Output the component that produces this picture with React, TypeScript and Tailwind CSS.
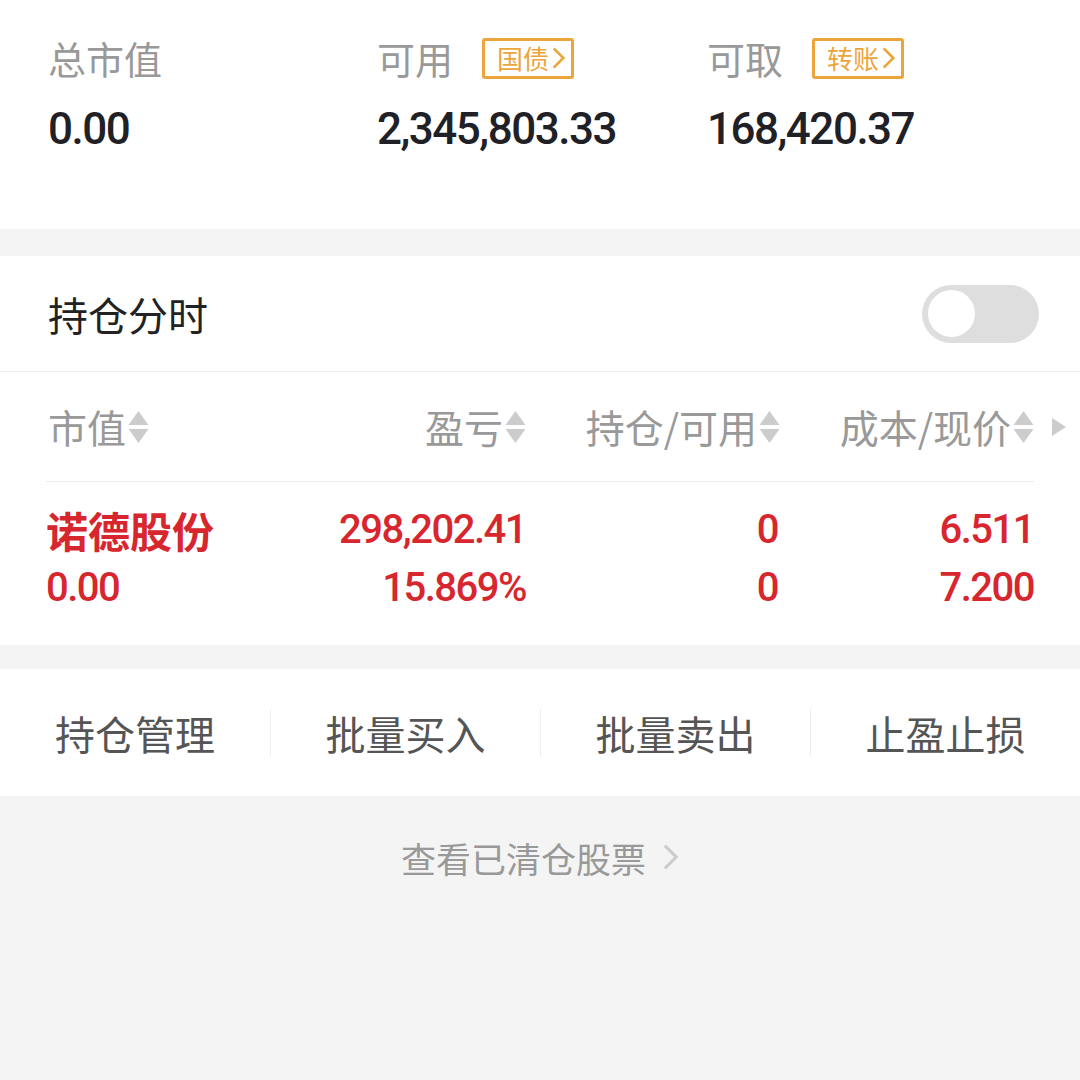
import React from "react";

const CJK = "font-['Noto_Sans_CJK_SC',sans-serif]";
const NUM = "font-['Roboto','Noto_Sans_CJK_SC',sans-serif]";

function Chevron({ className }: { className?: string }) {
  return (
    <svg viewBox="0 0 12 20" className={className} fill="none" stroke="currentColor" strokeWidth="2.2">
      <path d="M2 2l8 8-8 8" />
    </svg>
  );
}

function Badge({ text }: { text: string }) {
  return (
    <span className="ml-[29px] flex h-[41px] items-center rounded-[3px] border-[3px] border-[#eca53a] pl-[12px] pr-[5px] text-[26px] leading-none text-[#eca53a]">
      {text}
      <Chevron className="ml-[2px] h-[24px] w-[15px]" />
    </span>
  );
}

function SortIcon() {
  return (
    <span className="ml-[2px] flex flex-col gap-[4px]">
      <svg viewBox="0 0 20 14" className="h-[14px] w-[21px]">
        <path d="M10 0L20 14H0z" fill="#cccccc" />
      </svg>
      <svg viewBox="0 0 20 14" className="h-[14px] w-[21px]">
        <path d="M0 0h20L10 14z" fill="#cccccc" />
      </svg>
    </span>
  );
}

function Summary({ label, value, badge }: { label: string; value: string; badge?: string }) {
  return (
    <div className="flex flex-col">
      <div className="flex h-[44px] items-center">
        <span className={`${CJK} text-[38px] leading-none text-[#999999]`}>{label}</span>
        {badge && <Badge text={badge} />}
      </div>
      <div className={`${NUM} mt-[25px] h-[48px] text-[44px] leading-[48px] font-medium tracking-[-1.5px] text-[#1f2126]`}>
        {value}
      </div>
    </div>
  );
}

const CELL = `${NUM} flex h-[44px] items-center text-[40px] leading-none font-medium tracking-[-1.5px]`;

export default function App() {
  const headers = [
    { t: "市值", left: true },
    { t: "盈亏" },
    { t: "持仓/可用" },
    { t: "成本/现价" },
  ];
  const actions = ["持仓管理", "批量买入", "批量卖出", "止盈止损"];

  return (
    <div className={`${CJK} h-[1080px] w-[1080px] bg-[#f4f4f4]`}>
      {/* 资产概要 */}
      <div className="grid h-[229px] grid-cols-[329px_330px_1fr] bg-white pl-[48px] pt-[36px]">
        <Summary label="总市值" value="0.00" />
        <Summary label="可用" value="2,345,803.33" badge="国债" />
        <Summary label="可取" value="168,420.37" badge="转账" />
      </div>

      {/* 持仓 */}
      <div className="mt-[27px] bg-white">
        <div className="flex h-[116px] items-center justify-between border-b border-[#ececec] pl-[48px] pr-[41px]">
          <span className="text-[40px] leading-none text-[#222222]">持仓分时</span>
          <div className="flex h-[58px] w-[117px] items-center rounded-full bg-[#dedede] px-[6px]">
            <div className="h-[47px] w-[47px] rounded-full bg-white" />
          </div>
        </div>

        <div className="relative pl-[46px] pr-[46px]">
          <div className="grid h-[110px] grid-cols-[1fr_252px_254px_254px] items-center border-b border-[#ececec]">
            {headers.map((h) => (
              <div key={h.t} className={`flex items-center ${h.left ? "justify-start pl-[2px]" : "justify-end"}`}>
                <span className="text-[39px] leading-none text-[#999999]">{h.t}</span>
                <SortIcon />
              </div>
            ))}
          </div>
          <svg viewBox="0 0 14 18" className="absolute right-[14px] top-[46px] h-[18px] w-[14px]">
            <path d="M0 0L14 9 0 18z" fill="#cccccc" />
          </svg>

          <div className="grid h-[163px] grid-cols-[1fr_252px_254px_254px] content-center gap-y-[14px] pb-[10px] text-[#d7262e]">
            <div className="flex h-[44px] items-center text-[42px] leading-none font-bold">诺德股份</div>
            <div className={`${CELL} justify-end`}>298,202.41</div>
            <div className={`${CELL} justify-end pr-[2px]`}>0</div>
            <div className={`${CELL} justify-end`}>6.511</div>
            <div className={CELL}>0.00</div>
            <div className={`${CELL} justify-end`}>15.869%</div>
            <div className={`${CELL} justify-end pr-[2px]`}>0</div>
            <div className={`${CELL} justify-end`}>7.200</div>
          </div>
        </div>
      </div>

      {/* 操作 */}
      <div className="mt-[24px] grid h-[127px] grid-cols-4 items-center bg-white">
        {actions.map((a, i) => (
          <div key={a} className={`flex h-[48px] items-center justify-center ${i > 0 ? "border-l border-[#eeeeee]" : ""}`}>
            <span className="text-[40px] leading-none text-[#555555]">{a}</span>
          </div>
        ))}
      </div>

      <div className="flex h-[122px] items-center justify-center gap-[16px] text-[#999999]">
        <span className="text-[35px] leading-none">查看已清仓股票</span>
        <Chevron className="h-[30px] w-[17px] text-[#cccccc]" />
      </div>
    </div>
  );
}
